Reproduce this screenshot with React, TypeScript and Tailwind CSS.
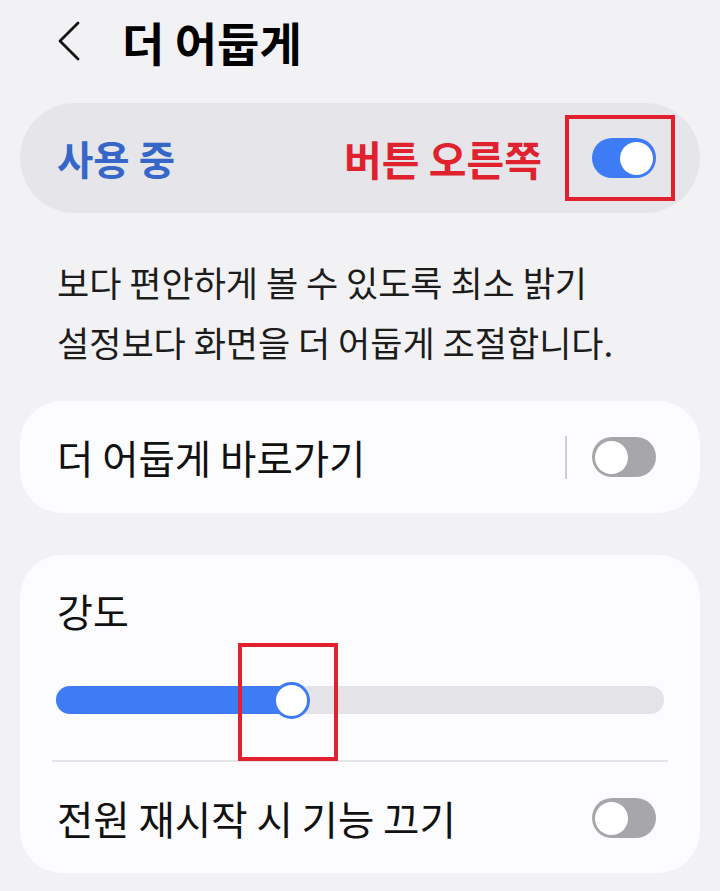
import React from "react";

const font = { fontFamily: '"Noto Sans CJK KR", "Noto Sans", sans-serif' };

function ToggleOn() {
  return (
    <div className="relative w-[64px] h-[40px] rounded-full bg-[#3d7cf5] shrink-0">
      <div className="absolute right-[3px] top-[3.5px] w-[33px] h-[33px] rounded-full bg-white" />
    </div>
  );
}

function ToggleOff() {
  return (
    <div className="relative w-[64px] h-[40px] rounded-full bg-[#a7a7ab] shrink-0">
      <div className="absolute left-[3px] top-[3.5px] w-[33px] h-[33px] rounded-full bg-white" />
    </div>
  );
}

export default function App() {
  return (
    <div
      className="w-[720px] h-[891px] bg-[#f2f2f4] overflow-hidden flex flex-col text-[#111111]"
      style={font}
    >
      {/* Header */}
      <div className="h-[82px] flex items-center shrink-0">
        <svg
          width="26"
          height="40"
          viewBox="0 0 26 40"
          className="ml-[57px]"
          fill="none"
          stroke="#111"
          strokeWidth="2.8"
          strokeLinecap="round"
          strokeLinejoin="round"
        >
          <polyline points="21,2 3,20 21,38" />
        </svg>
        <div className="ml-[39px] text-[46px] font-bold leading-none text-black">
          더 어둡게
        </div>
      </div>

      {/* Master switch pill */}
      <div className="mt-[21px] mx-[20px] h-[110px] rounded-full bg-[#e6e6ea] flex items-center pl-[37px] pr-[44px] shrink-0">
        <div className="text-[39.5px] font-bold text-[#3566c8] leading-none">사용 중</div>
        <div className="ml-auto text-[41px] font-bold text-[#e0222f] leading-none mr-[50px]">
          버튼 오른쪽
        </div>
        <div className="relative">
          <ToggleOn />
          <div className="absolute left-[-27px] top-[-23px] w-[110px] h-[86px] border-[4px] border-[#e3202d]" />
        </div>
      </div>

      {/* Description */}
      <div className="mt-[39px] px-[57px] text-[35px] leading-[60px] text-[#1c1c1c] shrink-0">
        <div>보다 편안하게 볼 수 있도록 최소 밝기</div>
        <div>설정보다 화면을 더 어둡게 조절합니다.</div>
      </div>

      {/* Shortcut card */}
      <div className="mt-[29px] mx-[20px] h-[112px] rounded-[42px] bg-[#fcfcfe] flex items-center pl-[37px] pr-[44px] shrink-0">
        <div className="text-[39.5px] leading-none">더 어둡게 바로가기</div>
        <div className="ml-auto w-[2px] h-[43px] bg-[#cfcfd3] mr-[25px]" />
        <ToggleOff />
      </div>

      {/* Intensity card */}
      <div className="mt-[42px] mx-[20px] rounded-[42px] bg-[#fcfcfe] pt-[33px] pb-[33px] shrink-0">
        <div className="px-[37px] text-[39px] leading-[44px]">강도</div>
        <div className="mt-[48px] px-[36px]">
          <div className="relative h-[40px] flex items-center">
            <div className="w-full h-[28px] rounded-full bg-[#e4e4e8] flex">
              <div className="w-[235px] h-full rounded-l-full bg-[#3d7cf5]" />
            </div>
            <div className="absolute left-[217px] top-[1.5px] w-[37px] h-[37px] rounded-full bg-white border-[3px] border-[#3d7cf5]" />
            <div className="absolute left-[182px] top-[-37px] w-[100px] h-[118px] border-[4px] border-[#e3202d] z-10" />
          </div>
        </div>
        <div className="mt-[40px] mx-[32px] h-[2px] bg-[#e4e4e7]" />
        <div className="mt-[34px] h-[44px] flex items-center pl-[37px] pr-[44px]">
          <div className="text-[39.5px] leading-none">전원 재시작 시 기능 끄기</div>
          <div className="ml-auto">
            <ToggleOff />
          </div>
        </div>
      </div>
    </div>
  );
}
